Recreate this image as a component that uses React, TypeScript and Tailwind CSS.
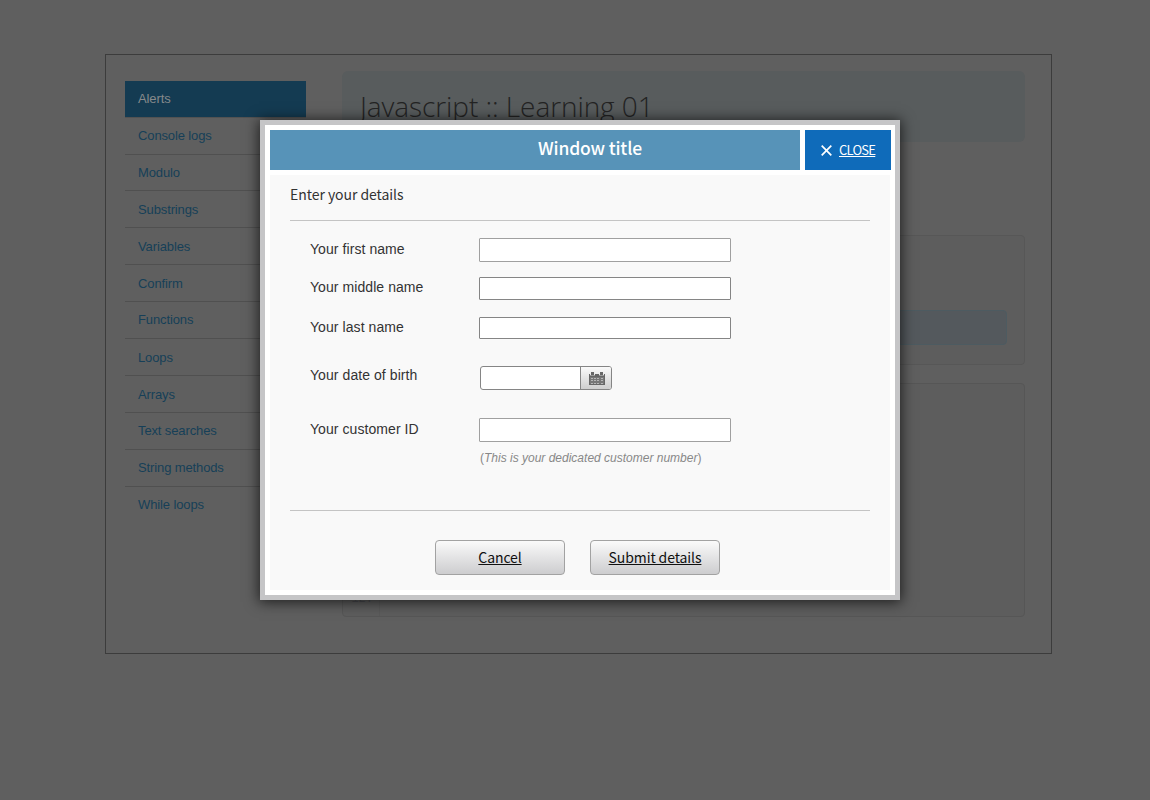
import React from 'react';

const navItems = [
  { label: 'Console logs', height: 'h-[37px] leading-[36px]' },
  { label: 'Modulo', height: 'h-[36px] leading-[36px]' },
  { label: 'Substrings', height: 'h-[37px] leading-[38px]' },
  { label: 'Variables', height: 'h-[37px] leading-[38px]' },
  { label: 'Confirm', height: 'h-[37px] leading-[38px]' },
  { label: 'Functions', height: 'h-[37px] leading-[36px]' },
  { label: 'Loops', height: 'h-[37px] leading-[38px]' },
  { label: 'Arrays', height: 'h-[37px] leading-[38px]' },
  { label: 'Text searches', height: 'h-[37px] leading-[36px]' },
  { label: 'String methods', height: 'h-[37px] leading-[36px]' },
];

function Sidebar() {
  return (
    <nav className="mt-[26px] ml-[19px] w-[181px] text-[13px] leading-[36px] tracking-[-0.12px] text-[#163f58]">
      <div className="h-[37px] border-b border-[#525252]">
        <div className="h-[36px] bg-[#143b52] pl-[13px] text-[#86898b]">Alerts</div>
      </div>
      {navItems.map((item) => (
        <div key={item.label} className={`${item.height} border-b border-[#505050] pl-[13px]`}>
          {item.label}
        </div>
      ))}
      <div className="h-[37px] pl-[13px]">While loops</div>
    </nav>
  );
}

function Page() {
  return (
    <div className="h-[800px] w-[1150px] bg-[#5f5f5f] pt-[54px] pl-[105px]">
      <div className="flex h-[600px] w-[947px] border border-[#3c3c3c] bg-[#5f5f5f]">
        <Sidebar />
        <main className="mt-[16px] ml-[36px] w-[683px]">
          <div className="h-[71px] rounded-md bg-[#585c5d] pt-[14px] pl-[18px]">
            <h1 className="font-['Open_Sans',sans-serif] text-[28px] leading-[42px] font-light tracking-[-0.08px] whitespace-nowrap text-[#232323]">
              Javascript :: Learning 01
            </h1>
          </div>
          <div className="mt-[93px] h-[130px] rounded border border-[#575757] bg-[#5d5d5d] px-[17px] pt-[74px]">
            <div className="h-[35px] rounded border border-[#4d5b61] bg-[#54595d]" />
          </div>
          <div className="mt-[18px] flex h-[234px] items-end rounded border border-[#565656] bg-[#5d5d5d]">
            <div className="h-full w-[37px] border-r border-[#595959] pt-[206px] pr-[6px] text-right font-['Liberation_Mono',monospace] text-[12px] leading-[18px] text-[#4b4c50]">
              12.
            </div>
          </div>
        </main>
      </div>
    </div>
  );
}

function CalendarIcon() {
  return (
    <svg width="16" height="13" viewBox="0 0 16 13" shapeRendering="crispEdges">
      <path fill="#777" d="M1 4h14v8H1z" />
      <path fill="#666" d="M0 2h1v11H0zM15 2h1v11h-1zM0 4h16v1H0zM0 12h16v1H0zM2 0h3v3H2zM11 0h3v3h-3zM6 2h4v3H6z" />
      <path fill="#999" d="M1 3h5v1H1zM10 3h5v1h-5z" />
      <path fill="#b5b5b5" d="M2 6h2v1H2zM5 6h2v1H5zM8 6h2v1H8zM12 6h2v1h-2zM2 8h2v1H2zM5 8h2v1H5zM8 8h2v1H8zM12 8h2v1h-2zM2 11h2v1H2zM5 11h2v1H5zM8 11h2v1H8zM12 11h2v1h-2z" />
    </svg>
  );
}

function Field({ label, row, input }: { label: string; row: string; input: string }) {
  return (
    <label className={`flex ${row}`}>
      <span className="w-[169px] leading-[22px]">{label}</span>
      <input className={`w-[252px] rounded-[1px] border bg-white px-1 outline-none ${input}`} />
    </label>
  );
}

function Modal() {
  return (
    <div
      role="dialog"
      className="h-[480px] w-[640px] border-[5px] border-[#c5c5c7] bg-white p-[5px] shadow-[0_1px_13px_1px_rgba(0,0,0,0.7)]"
    >
      <header className="flex w-[621px] gap-[5px] font-['Noto_Sans_CJK_SC',sans-serif] text-white">
        <div className="h-[40px] w-[530px] bg-[#5793b8] pl-[110px] text-center text-[17.5px] leading-[36px] font-medium tracking-[-0.15px]">
          Window title
        </div>
        <button className="flex h-[40px] w-[86px] items-center bg-[#0f6bba] pl-[16px] text-[13px]">
          <svg width="11" height="11" viewBox="0 0 11 11" className="mr-[7px]">
            <path d="M.7.7l9.6 9.6M10.3.7L.7 10.3" stroke="white" strokeWidth="1.7" fill="none" />
          </svg>
          <span className="tracking-[-0.75px] underline">CLOSE</span>
        </button>
      </header>
      <section className="mt-[5px] h-[415px] w-[620px] bg-[#f9f9f9] px-[20px] text-[#333]">
        <h2 className="h-[46px] border-b border-[#c4c4c4] pt-[8px] font-['Noto_Sans_CJK_SC',sans-serif] text-[14px] leading-[22px] tracking-[-0.05px]">
          Enter your details
        </h2>
        <div className="h-[289px] pl-[20px] text-[14px] tracking-[0.07px]">
          <Field label="Your first name" row="pt-[17px]" input="h-[24px] border-[#a0a0a0]" />
          <Field label="Your middle name" row="pt-[14px]" input="mt-[1px] h-[23px] border-[#858585]" />
          <Field label="Your last name" row="pt-[16px]" input="mt-[1px] h-[22px] border-[#858585]" />
          <div className="flex pt-[25px]">
            <span className="w-[170px] leading-[22px]">Your date of birth</span>
            <div className="mt-[2px] flex h-[24px] w-[132px] overflow-hidden rounded-[3px] border border-[#858585] bg-white">
              <input className="w-[99px] outline-none" />
              <button className="flex w-[31px] items-center justify-center border-l border-[#858585] bg-linear-to-b from-[#fafafa] to-[#cecece] pl-[1px]">
                <CalendarIcon />
              </button>
            </div>
          </div>
          <Field label="Your customer ID" row="pt-[28px]" input="h-[24px] border-[#a0a0a0]" />
          <p className="mt-[8px] ml-[170px] text-[12px] leading-[16px] tracking-normal text-[#888]">
            (<em>This is your dedicated customer number</em>)
          </p>
        </div>
        <footer className="flex gap-[25px] border-t border-[#c4c4c4] pt-[29px] pl-[145px] font-['Noto_Sans_CJK_SC',sans-serif] text-[14px] tracking-[-0.1px] text-[#111]">
          <button className="h-[35px] w-[130px] rounded border border-[#a2a2a2] bg-linear-to-b from-[#fafafa] to-[#cdcdcf] underline">
            Cancel
          </button>
          <button className="h-[35px] w-[130px] rounded border border-[#a2a2a2] bg-linear-to-b from-[#fafafa] to-[#cdcdcf] underline">
            Submit details
          </button>
        </footer>
      </section>
    </div>
  );
}

export default function App() {
  return (
    <div className="relative h-[800px] w-[1150px] overflow-hidden font-['Liberation_Sans',Arial,sans-serif]">
      <Page />
      <div className="absolute inset-0 pt-[120px] pl-[260px]">
        <Modal />
      </div>
    </div>
  );
}
